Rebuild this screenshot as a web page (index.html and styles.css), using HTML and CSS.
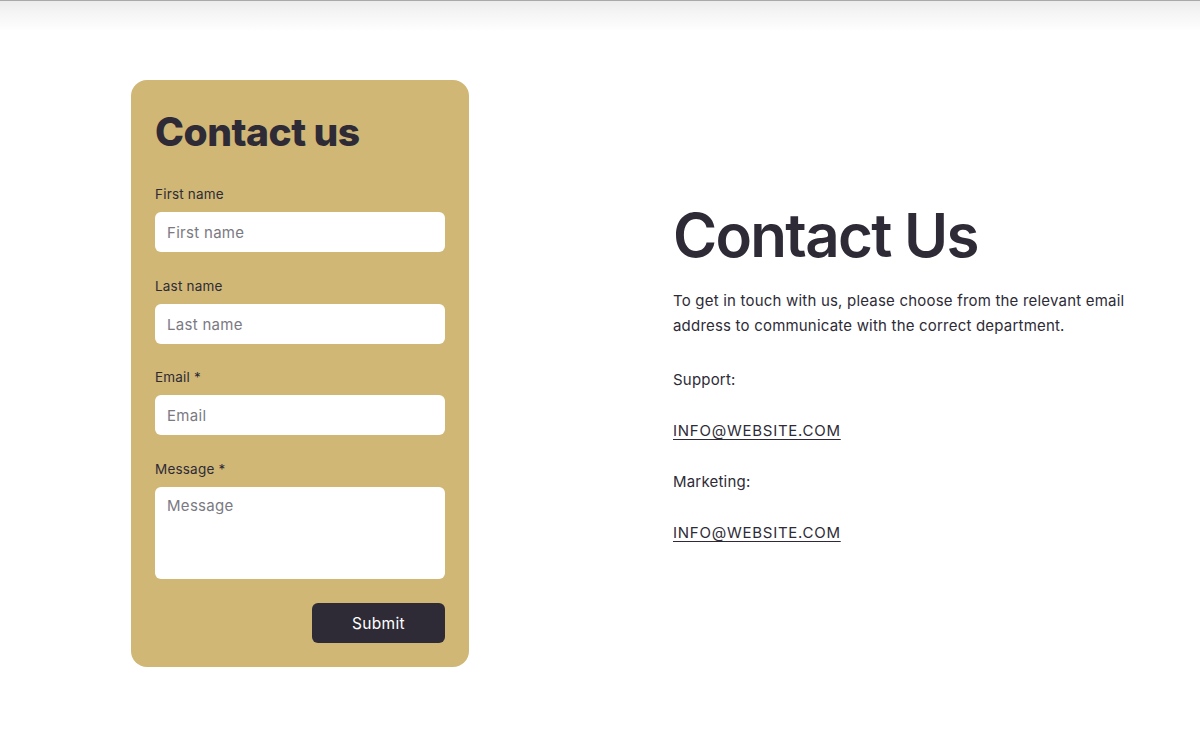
FILE: index.html
```html
<!DOCTYPE html>
<html>
<head>
<meta charset="utf-8">
<link rel="stylesheet" href="styles.css">
</head>
<body>
<div class="topbar"></div>
<main class="page">
  <section class="card">
    <h2 class="card-title">Contact us</h2>
    <form class="form">
      <label class="field">
        <span class="label">First name</span>
        <input class="input" type="text" placeholder="First name">
      </label>
      <label class="field">
        <span class="label">Last name</span>
        <input class="input" type="text" placeholder="Last name">
      </label>
      <label class="field">
        <span class="label">Email *</span>
        <input class="input" type="text" placeholder="Email">
      </label>
      <label class="field">
        <span class="label">Message *</span>
        <textarea class="input textarea" placeholder="Message"></textarea>
      </label>
      <div class="actions">
        <button class="submit" type="button">Submit</button>
      </div>
    </form>
  </section>
  <section class="info">
    <h1 class="info-title">Contact Us</h1>
    <p class="intro">To get in touch with us, please choose from the relevant email address to communicate with the correct department.</p>
    <p class="line">Support:</p>
    <p class="line"><a class="mail" href="#">INFO@WEBSITE.COM</a></p>
    <p class="line">Marketing:</p>
    <p class="line"><a class="mail" href="#">INFO@WEBSITE.COM</a></p>
  </section>
</main>
</body>
</html>
```
FILE: styles.css
```css
* { box-sizing: border-box; }
html, body { margin: 0; padding: 0; background: #fff; }
body {
  font-family: "Inter", "Open Sans", sans-serif;
  color: #2e2b37;
  width: 1200px;
  height: 748px;
  overflow: hidden;
}
.topbar {
  height: 32px;
  border-top: 1px solid #a9a9a9;
  background: linear-gradient(to bottom, #ececec 0%, #f5f5f5 40%, #ffffff 100%);
}
.page {
  display: flex;
  align-items: flex-start;
  padding: 48px 0 0 131px;
}
.card {
  width: 338px;
  height: 587px;
  background: #d0b776;
  border-radius: 16px;
  padding: 28px 24px 24px 24px;
}
.card-title {
  margin: 0 0 29px 0;
  font-size: 39px;
  font-weight: 800;
  letter-spacing: -0.5px;
  line-height: 48px;
}
.form { display: flex; flex-direction: column; }
.field { display: flex; flex-direction: column; margin-bottom: 25px; }
.field:nth-child(2) { margin-bottom: 24px; }
.label {
  font-size: 13.5px;
  letter-spacing: 0.2px;
  line-height: 18px;
  margin-bottom: 9px;
}
.input {
  width: 290px;
  height: 40px;
  border: none;
  border-radius: 6px;
  background: #fff;
  font-family: inherit;
  font-size: 15px;
  letter-spacing: 0.3px;
  color: #2e2b37;
  padding: 0 12px;
  outline: none;
}
.input::placeholder { color: #7b7982; }
.textarea {
  height: 92px;
  padding: 9px 12px;
  resize: none;
  line-height: 20px;
}
.field:last-of-type { margin-bottom: 24px; }
.actions { display: flex; justify-content: flex-end; }
.submit {
  width: 133px;
  height: 40px;
  background: #2e2b37;
  color: #fff;
  border: none;
  border-radius: 6px;
  font-family: inherit;
  font-size: 15.5px;
  font-weight: 400;
  letter-spacing: 0.3px;
}
.info {
  margin-left: 204px;
  margin-top: 123px;
  width: 480px;
}
.info-title {
  margin: 0 0 21px 0;
  font-size: 60px;
  font-weight: 600;
  line-height: 64px;
  letter-spacing: -1.7px;
}
.intro,
.line {
  margin: 0 0 26px 0;
  font-size: 15px;
  letter-spacing: 0.2px;
  line-height: 25px;
}
.intro { margin-bottom: 29px; }
.mail {
  color: #2e2b37;
  text-decoration: underline;
  text-underline-offset: 3px;
  letter-spacing: 0.75px;
}
```
